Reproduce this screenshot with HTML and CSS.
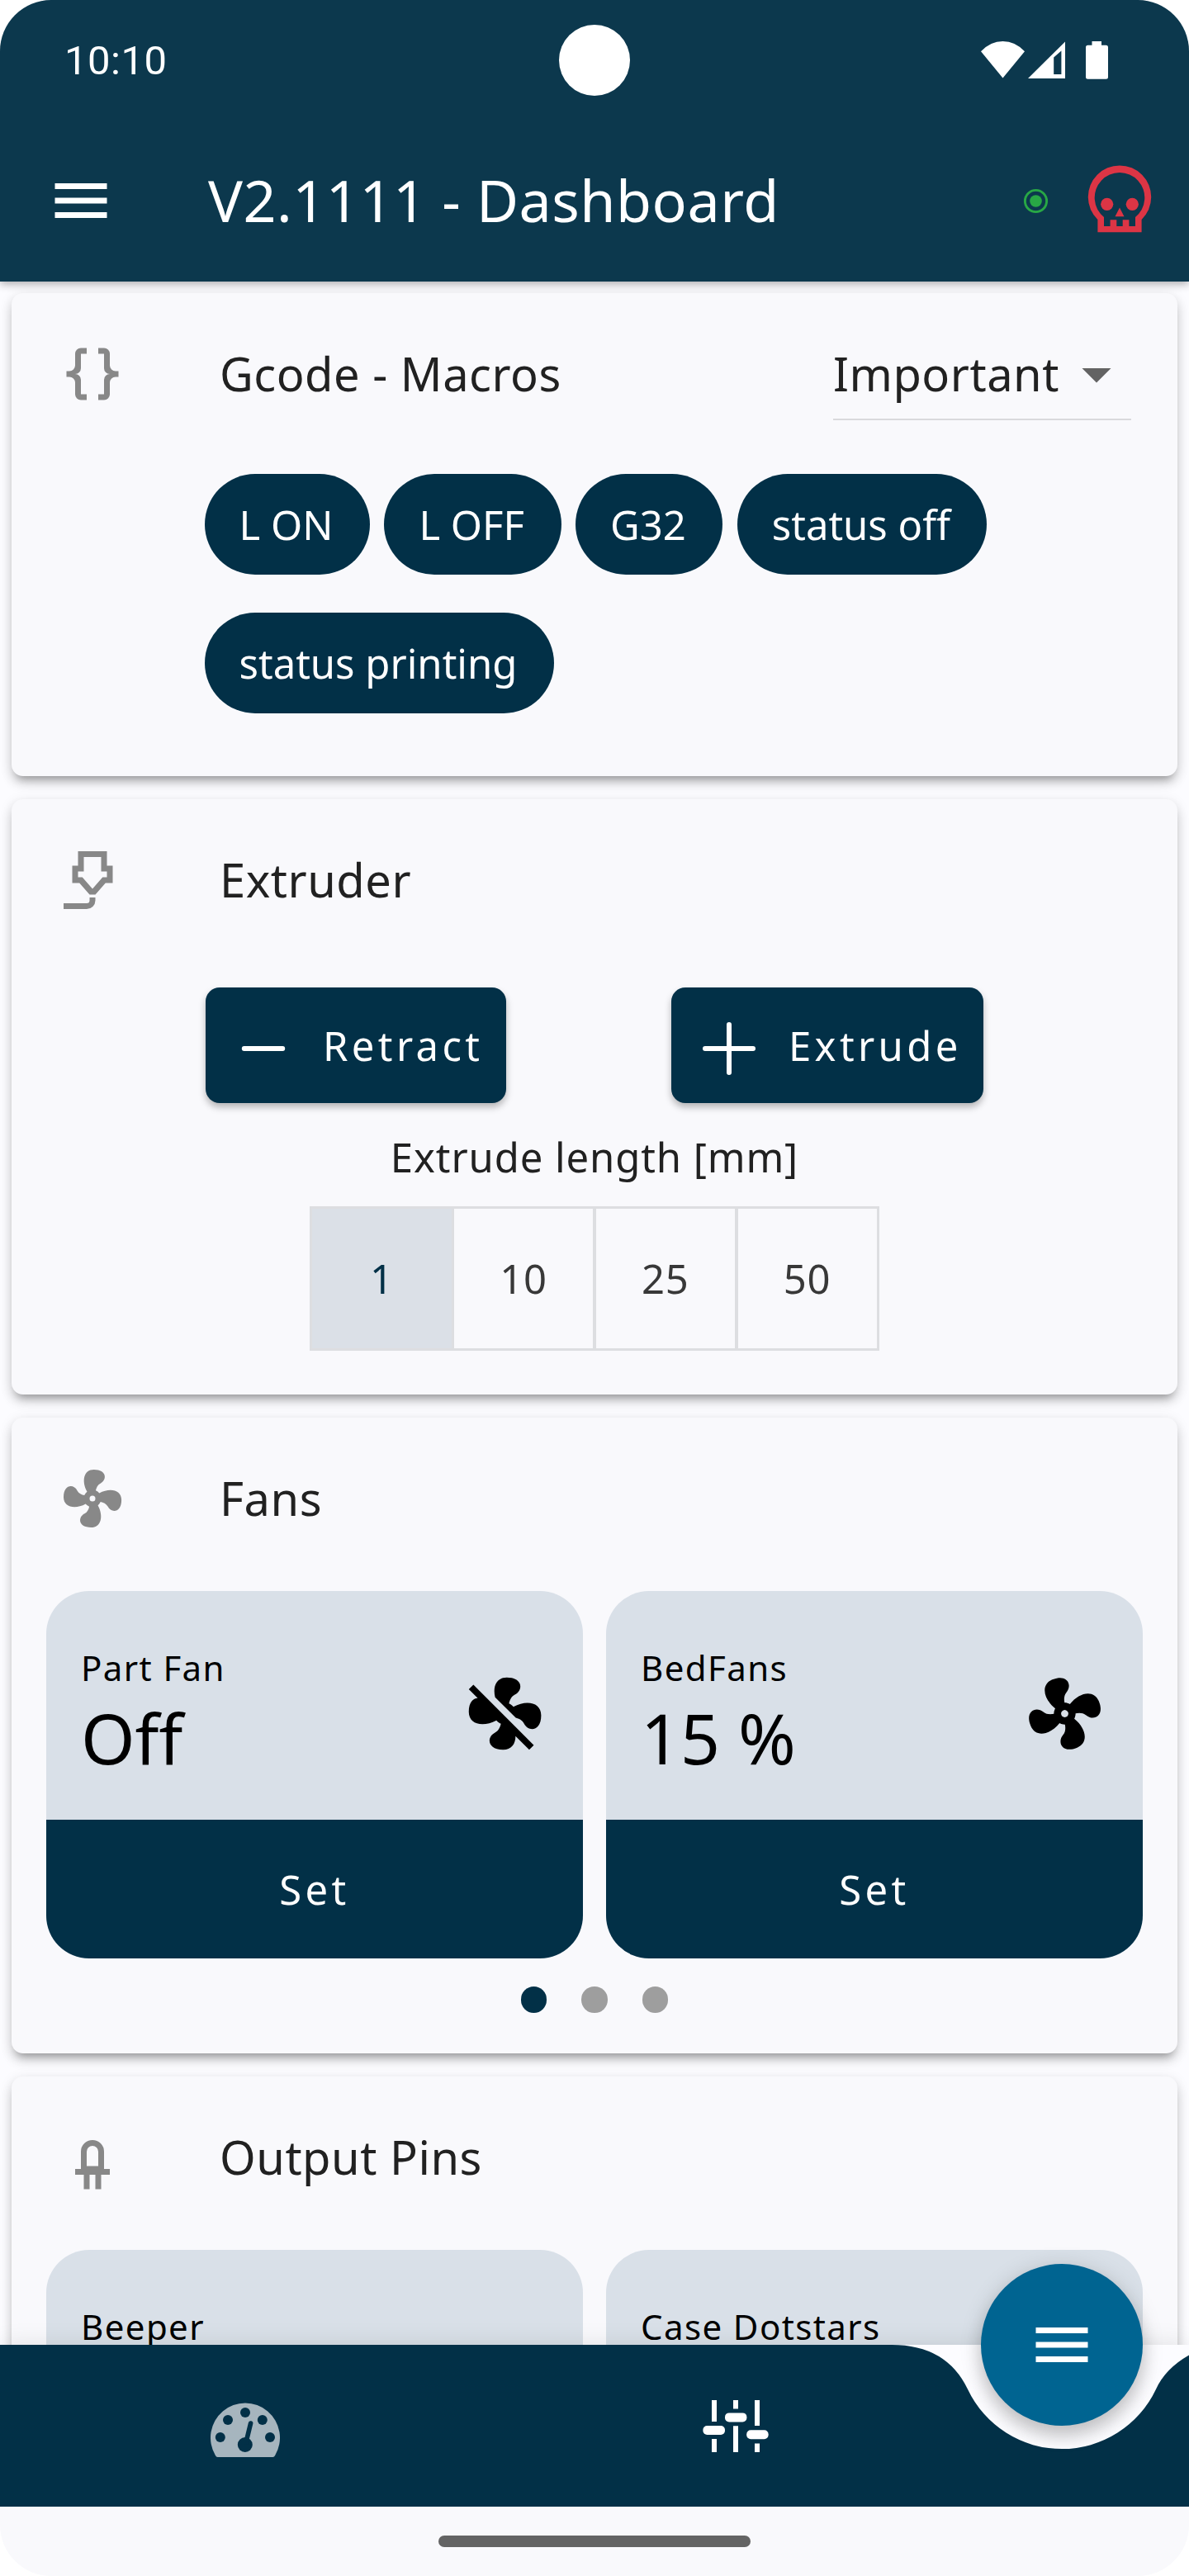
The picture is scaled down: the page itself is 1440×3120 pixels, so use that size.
FILE: index.html
```html
<!DOCTYPE html>
<html lang="en">
<head>
<meta charset="utf-8">
<title>V2.1111 - Dashboard</title>
<link rel="stylesheet" href="styles.css">
</head>
<body>
<div class="screen">
  <header class="top">
    <div class="statusbar">
      <span class="clock">10:10</span>
      <span class="punch"></span>
      <svg class="status-icons" width="156" height="50" viewBox="1187 48 156 50" fill="#fff">
        <path d="M1188 62.3Q1199.500 50 1214.500 50Q1229.500 50 1241 62.300L1214.500 94.500Z"/>
        <path fill-rule="evenodd" d="M1245 95L1290 50.500V95ZM1276.200 69.500V90H1285.400V61.500Z"/>
        <path d="M1322.500 50H1334V54.700H1339.500Q1342 54.700 1342 57.200V93.200Q1342 95.700 1339.500 95.700H1317.500Q1315 95.700 1315 93.200V57.200Q1315 54.700 1317.500 54.700H1322.500Z"/>
      </svg>
    </div>
    <div class="appbar">
      <svg class="icon" viewBox="0 0 24 24" fill="#fff"><path d="M3 18h18v-2H3v2zm0-5h18v-2H3v2zm0-7v2h18V6H3z"/></svg>
      <h1 class="title">V2.1111 - Dashboard</h1>
      <svg class="online" viewBox="0 0 24 24"><circle cx="12" cy="12" r="9" fill="none" stroke="#28a745" stroke-width="2"/><circle cx="12" cy="12" r="5" fill="#28a745"/></svg>
      <svg class="skull" viewBox="1317 200 78 84" fill="#dc3545">
        <path fill-rule="evenodd" d="M1329.400 281.200V266A38.200 38.200 0 1 1 1382.600 266V281.200ZM1337 263V274H1344.600V266.200H1352.300V274H1359.700V266.200H1367.400V274H1375V263A30.300 30.300 0 1 0 1337 263Z"/>
        <circle cx="1340.700" cy="247.300" r="7.600"/><circle cx="1371.300" cy="247.300" r="7.600"/>
        <path d="M1356 251.500L1361.500 262.300H1350.500Z"/>
      </svg>
    </div>
  </header>

  <main class="content">
    <section class="card macros">
      <div class="card-head">
        <svg class="icon" viewBox="0 0 24 24" fill="#888"><path d="M8,3A2,2 0 0,0 6,5V9A2,2 0 0,1 4,11H3V13H4A2,2 0 0,1 6,15V19A2,2 0 0,0 8,21H10V19H8V14A2,2 0 0,0 6,12A2,2 0 0,0 8,10V5H10V3M16,3A2,2 0 0,1 18,5V9A2,2 0 0,0 20,11H21V13H20A2,2 0 0,0 18,15V19A2,2 0 0,1 16,21H14V19H16V14A2,2 0 0,1 18,12A2,2 0 0,1 16,10V5H14V3H16Z"/></svg>
        <h2>Gcode - Macros</h2>
        <div class="dropdown">
          <span>Important</span>
          <svg class="icon" viewBox="0 0 24 24" fill="#636363"><path d="M7 10l5 5 5-5z"/></svg>
        </div>
      </div>
      <div class="chips">
        <button class="chip">L ON</button>
        <button class="chip">L OFF</button>
        <button class="chip">G32</button>
        <button class="chip">status off</button>
        <button class="chip">status printing</button>
      </div>
    </section>

    <section class="card extruder">
      <div class="card-head">
        <svg class="icon" viewBox="0 0 24 24" fill="#888"><path d="M7,2H17V7H19V13H16.500L13,17H11L7.500,13H5V7H7V2M9,4V9H7V11H8.500L12,15L15.500,11H17V9H15V4H9M10,22H2V20H10A1,1 0 0,0 11,19V18H13V19A3,3 0 0,1 10,22Z"/></svg>
        <h2>Extruder</h2>
      </div>
      <div class="actions">
        <button class="action retract">
          <svg width="64" height="64" viewBox="0 0 64 64" stroke="#fff" stroke-width="5.800" stroke-linecap="round"><path d="M8.700 32H55.300"/></svg>
          Retract
        </button>
        <button class="action extrude">
          <svg width="64" height="64" viewBox="0 0 64 64" stroke="#fff" stroke-width="6" stroke-linecap="round"><path d="M3 32H61M32 3V61"/></svg>
          Extrude
        </button>
      </div>
      <p class="length-label">Extrude length [mm]</p>
      <div class="toggle">
        <button class="selected">1</button><button>10</button><button>25</button><button>50</button>
      </div>
    </section>

    <section class="card fans">
      <div class="card-head">
        <svg class="icon" viewBox="0 0 24 24" fill="#888"><path d="M12,11A1,1 0 0,0 11,12A1,1 0 0,0 12,13A1,1 0 0,0 13,12A1,1 0 0,0 12,11M12.5,2C17,2 17.11,5.57 14.75,6.75C13.76,7.24 13.32,8.29 13.13,9.22C13.61,9.42 14.03,9.73 14.35,10.13C18.05,8.13 22.03,8.92 22.03,12.5C22.03,17 18.46,17.1 17.28,14.73C16.78,13.74 15.72,13.3 14.79,13.11C14.59,13.59 14.28,14 13.88,14.34C15.87,18.03 15.08,22 11.5,22C7,22 6.91,18.42 9.27,17.24C10.25,16.75 10.69,15.71 10.89,14.79C10.4,14.59 9.97,14.27 9.65,13.87C5.96,15.85 2,15.07 2,11.5C2,7 5.56,6.89 6.74,9.26C7.24,10.25 8.29,10.68 9.22,10.87C9.41,10.39 9.73,9.97 10.14,9.65C8.15,5.96 8.94,2 12.5,2Z"/></svg>
        <h2>Fans</h2>
      </div>
      <div class="tiles">
        <article class="tile">
          <div class="tile-body">
            <div class="reading"><span class="name">Part Fan</span><span class="value">Off</span></div>
            <svg class="fan" viewBox="0 0 24 24"><path d="M12.5,2C9.64,2 8.57,4.55 9.29,7.47L15,13.16C15.87,13.37 16.81,13.81 17.28,14.73C18.46,17.1 22.03,17 22.03,12.5C22.03,8.92 18.05,8.13 14.35,10.13C14.03,9.73 13.61,9.42 13.13,9.22C13.32,8.29 13.76,7.24 14.75,6.75C17.11,5.57 17,2 12.5,2M3.28,4L2,5.27L4.47,7.73C3.22,7.74 2,8.87 2,11.5C2,15.07 5.96,15.85 9.65,13.87C9.97,14.27 10.4,14.59 10.89,14.79C10.69,15.71 10.25,16.75 9.27,17.24C6.91,18.42 7,22 11.5,22C13.8,22 14.94,20.36 14.94,18.21L18.73,22L20,20.72L3.28,4Z"/></svg>
          </div>
          <button class="set">Set</button>
        </article>
        <article class="tile">
          <div class="tile-body">
            <div class="reading"><span class="name">BedFans</span><span class="value">15 %</span></div>
            <svg class="fan spinning" viewBox="0 0 24 24"><path d="M12,11A1,1 0 0,0 11,12A1,1 0 0,0 12,13A1,1 0 0,0 13,12A1,1 0 0,0 12,11M12.5,2C17,2 17.11,5.57 14.75,6.75C13.76,7.24 13.32,8.29 13.13,9.22C13.61,9.42 14.03,9.73 14.35,10.13C18.05,8.13 22.03,8.92 22.03,12.5C22.03,17 18.46,17.1 17.28,14.73C16.78,13.74 15.72,13.3 14.79,13.11C14.59,13.59 14.28,14 13.88,14.34C15.87,18.03 15.08,22 11.5,22C7,22 6.91,18.42 9.27,17.24C10.25,16.75 10.69,15.71 10.89,14.79C10.4,14.59 9.97,14.27 9.65,13.87C5.96,15.85 2,15.07 2,11.5C2,7 5.56,6.89 6.74,9.26C7.24,10.25 8.29,10.68 9.22,10.87C9.41,10.39 9.73,9.97 10.14,9.65C8.15,5.96 8.94,2 12.5,2Z"/></svg>
          </div>
          <button class="set">Set</button>
        </article>
      </div>
      <div class="pager"><i class="current"></i><i></i><i></i></div>
    </section>

    <section class="card pins">
      <div class="card-head">
        <svg class="icon" viewBox="0 0 24 24" fill="#888"><path fill-rule="evenodd" d="M12,6A4,4 0 0,0 8,10V16H6V18H9V23H11V18H13V23H15V18H18V16H16V10A4,4 0 0,0 12,6M12,8A2,2 0 0,1 14,10V15H10V10A2,2 0 0,1 12,8Z"/></svg>
        <h2>Output Pins</h2>
      </div>
      <div class="tiles">
        <article class="tile"><div class="tile-body"><div class="reading"><span class="name">Beeper</span></div></div></article>
        <article class="tile"><div class="tile-body"><div class="reading"><span class="name">Case Dotstars</span></div></div></article>
      </div>
    </section>
  </main>

  <nav class="navbar">
    <svg class="nav-shape" width="1440" height="196" viewBox="0 0 1440 196"><path fill="#023047" d="M0 0H1080Q1146.400 0 1172.100 54A126 126 0 0 0 1399.900 54Q1411 29 1440 12.500V196H0Z"/></svg>
    <a class="nav-item">
      <svg class="icon" viewBox="255 2896 84 84">
        <path fill="#a6b5be" d="M263.500 2976Q261.800 2976 260.900 2974A42 42 0 1 1 333.100 2974Q332.200 2976 330.500 2976Z"/>
        <g fill="#023047"><circle cx="266.800" cy="2952" r="6"/><circle cx="276" cy="2931" r="6"/><circle cx="297" cy="2922" r="6"/><circle cx="317.800" cy="2931" r="6"/><circle cx="327" cy="2952" r="6"/><circle cx="296.800" cy="2961" r="9"/></g>
        <path stroke="#023047" stroke-width="5.600" stroke-linecap="round" d="M298 2958L303.600 2935"/>
      </svg>
    </a>
    <a class="nav-item">
      <svg class="icon" viewBox="848 2896 84 84" fill="#fff">
        <path d="M861 2907h6v26h-6zM861 2954h6v16h-6zM887 2907h6v10.500h-6zM887 2938.200h6v31.800h-6zM913 2907h6v31h-6zM913 2959.400h6v10.600h-6z"/>
        <rect x="850.400" y="2938" width="26.600" height="11" rx="5"/><rect x="877" y="2922.400" width="26.400" height="11" rx="5"/><rect x="903.200" y="2943.300" width="26.400" height="11" rx="5"/>
      </svg>
    </a>
    <button class="fab"><svg class="icon" viewBox="0 0 24 24" fill="#fff"><path d="M3 18h18v-2H3v2zm0-5h18v-2H3v2zm0-7v2h18V6H3z"/></svg></button>
  </nav>
  <footer class="gesture"><span></span></footer>
</div>
</body>
</html>
```
FILE: styles.css
```css
* { box-sizing: border-box; }
body { margin: 0; background: #fff; font-family: "Noto Sans", sans-serif; }
h1, h2, p { margin: 0; font-weight: 400; }
button { border: 0; padding: 0; margin: 0; font: inherit; background: none; }
svg { display: block; flex: none; }
.icon { width: 84px; height: 84px; }

.screen {
  width: 1440px; height: 3120px; overflow: hidden;
  display: flex; flex-direction: column;
  border-radius: 62px; background: #fcfcff;
}

.top { flex: none; height: 341px; background: #0c384d; position: relative; z-index: 2; box-shadow: 0 3px 10px rgba(0,0,0,.32); }
.statusbar { height: 145px; display: grid; grid-template-columns: 1fr 86px 1fr; align-items: center; padding: 0 97px 0 78px; }
.clock { font: 400 49px/58px Roboto, sans-serif; letter-spacing: .5px; color: #fff; padding-top: 3px; }
.punch { width: 86px; height: 86px; border-radius: 50%; background: #fff; margin-left: 9.5px; }
.status-icons { justify-self: end; margin-top: 1px; }
.appbar { height: 196px; display: flex; align-items: center; padding: 0 45px 0 56px; }
.title { flex: 1; padding: 0 0 3px 112px; font-size: 70px; line-height: 96px; letter-spacing: .5px; color: #fff; }
.online { width: 35px; height: 35px; margin-right: 45px; }
.skull { width: 78px; height: 84px; margin-top: -2px; }

.content { flex: none; height: 2499px; overflow: hidden; padding: 14px; display: flex; flex-direction: column; gap: 28px; }
.card { flex: none; border-radius: 14px; background: #f9f9fc; box-shadow: 0 10px 10px -7px rgba(0,0,0,.25), 0 9px 14px rgba(0,0,0,.14), 0 3px 16px rgba(0,0,0,.1); }
.card-head { height: 196px; padding: 0 56px; display: flex; align-items: center; }
.card-head h2 { padding: 0 0 2px 112px; flex: 1; font-size: 56px; line-height: 76px; letter-spacing: .52px; color: #212121; }
.dropdown { width: 361px; height: 112px; display: flex; justify-content: space-between; align-items: center; border-bottom: 2px solid #d9d9dc; padding-top: 2px; font-size: 56px; line-height: 76px; letter-spacing: .52px; color: #212121; }
.dropdown span { padding-bottom: 2px; }

.macros { height: 584.5px; }
.chips { display: flex; flex-wrap: wrap; gap: 45.5px 17.5px; padding: 22.75px 200px 0 233.5px; }
.chip { height: 122.5px; padding: 0 44.5px 0 42px; border-radius: 62px; background: #023047; color: #fff; font-size: 49px; line-height: 122px; }

.extruder { height: 721.5px; }
.actions { display: flex; justify-content: space-between; padding: 32px 235px 0; }
.action { height: 140px; border-radius: 17px; background: #023047; color: #fff; display: flex; align-items: center; font-size: 49px; letter-spacing: 4.375px; box-shadow: 0 5px 8px rgba(0,0,0,.28); }
.action svg { margin-top: 8px; }
.retract { width: 364px; padding-left: 38px; gap: 40px; }
.extrude { width: 378px; padding-left: 38px; gap: 40px; }
.length-label { padding-top: 32px; text-align: center; font-size: 49px; line-height: 67px; letter-spacing: .9px; color: #212121; }
.toggle { width: 689.5px; height: 175px; margin: 26px auto 0; display: grid; grid-template-columns: repeat(4, 1fr); gap: 3.5px; border: 3.5px solid #dddee1; background: #dddee1; }
.toggle button { background: #f9f9fc; color: #383838; font-size: 49px; letter-spacing: .9px; }
.toggle .selected { background: #dbe0e7; color: #023047; }

.fans { height: 769.5px; }
.tiles { display: grid; grid-template-columns: 1fr 1fr; gap: 28px; padding: 14px 42px 0; }
.tile { border-radius: 52px; overflow: hidden; background: #d9e0e8; }
.tile-body { height: 276.5px; display: flex; justify-content: space-between; align-items: flex-start; padding: 64px 42px 0; }
.reading { display: flex; flex-direction: column; color: #000; }
.name { font-size: 42px; line-height: 57px; letter-spacing: 1.4px; }
.value { font-size: 84px; line-height: 114px; }
.fan { width: 105px; height: 105px; margin-top: 31.5px; }
.spinning { transform: rotate(-23deg); }
.set { width: 100%; height: 168px; background: #023047; color: #fff; font-size: 49px; letter-spacing: 4.375px; }
.pager { display: flex; justify-content: center; gap: 42px; padding-top: 34.5px; }
.pager i { width: 31.5px; height: 31.5px; border-radius: 50%; background: #9e9e9e; }
.pager .current { background: #023047; }
.pins { height: 769.5px; }

.navbar { flex: none; height: 196px; display: flex; align-items: center; padding-right: 252px; position: relative; z-index: 3; background: #fcfcff; box-shadow: 0 0 28px rgba(0,0,0,.1); }
.nav-shape { position: absolute; inset: 0; }
.nav-item { flex: 1; display: flex; justify-content: center; position: relative; }
.fab { position: absolute; left: 1188px; top: -98px; width: 196px; height: 196px; border-radius: 50%; background: #006491; display: flex; align-items: center; justify-content: center; box-shadow: 0 14px 20px rgba(0,0,0,.16), 0 3px 28px rgba(0,0,0,.14); }
.gesture { flex: 1; background: #f9f9fc; display: flex; justify-content: center; padding-top: 34.5px; position: relative; z-index: 4; }
.gesture span { width: 378px; height: 14px; border-radius: 7px; background: #646464; }
```
